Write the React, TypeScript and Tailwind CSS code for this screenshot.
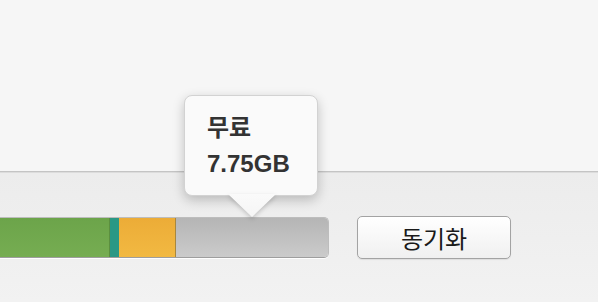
import React from "react";

export default function App() {
  const font = { fontFamily: '"Liberation Sans", "Noto Sans CJK KR", sans-serif' };
  return (
    <div className="relative w-[598px] h-[302px] overflow-hidden flex flex-col" style={font}>
      <div className="h-[171px] bg-[#f6f6f6]" />
      <div className="h-[1px] bg-[#c4c4c4]" />
      <div className="h-[1px] bg-[#dcdcdc]" />
      <div className="flex-1 bg-gradient-to-b from-[#ececec] to-[#f2f2f2] flex items-start pt-[44px]">
        <div className="w-[329px] h-[41px] flex rounded-r-[5px] overflow-hidden border border-l-0 border-[#bdbdbd] border-b-[#9e9e9e] shadow-[0_1px_0_rgba(255,255,255,0.9)]">
          <div className="w-[110px] bg-gradient-to-b from-[#6ca44a] to-[#76ad52] border-r border-[#5b8f3f]" />
          <div className="w-[9px] bg-[#2a9885]" />
          <div className="w-[57px] bg-gradient-to-b from-[#ecac37] to-[#f2b942] border-r border-[#a8873e]" />
          <div className="flex-1 bg-gradient-to-b from-[#b5b5b5] to-[#cbcbcb]" />
        </div>
        <button className="ml-[28px] -mt-[1px] w-[154px] h-[43px] rounded-[5px] border border-[#a3a3a3] bg-gradient-to-b from-[#ffffff] to-[#f0f0f0] shadow-[0_1px_1px_rgba(0,0,0,0.08)] text-[24px] leading-none text-[#1a1a1a] flex items-center justify-center" style={{ fontFamily: '"Noto Sans CJK KR", sans-serif' }}>
          동기화
        </button>
      </div>

      <div className="absolute left-[184px] top-[95px] w-[134px] h-[101px]">
        <div className="absolute inset-0 rounded-[8px] bg-[#fafafa] border border-[#d2d2d2] shadow-[0_4px_12px_rgba(0,0,0,0.22)]" />
        <svg className="absolute left-[43px] top-[99px]" width="50" height="26" viewBox="0 0 50 26" style={{ filter: "drop-shadow(0 2px 2px rgba(0,0,0,0.18))" }}>
          <defs>
            <linearGradient id="ag" x1="0" y1="0" x2="0" y2="1">
              <stop offset="0" stopColor="#fafafa" />
              <stop offset="1" stopColor="#f5f5f5" />
            </linearGradient>
          </defs>
          <polygon points="1,0 49,0 25,23" fill="url(#ag)" />
        </svg>
        <div className="relative pl-[23px] pt-[15px] text-[24px] leading-[36px] font-bold text-[#333333]">
          <div>무료</div>
          <div>7.75GB</div>
        </div>
      </div>
    </div>
  );
}
